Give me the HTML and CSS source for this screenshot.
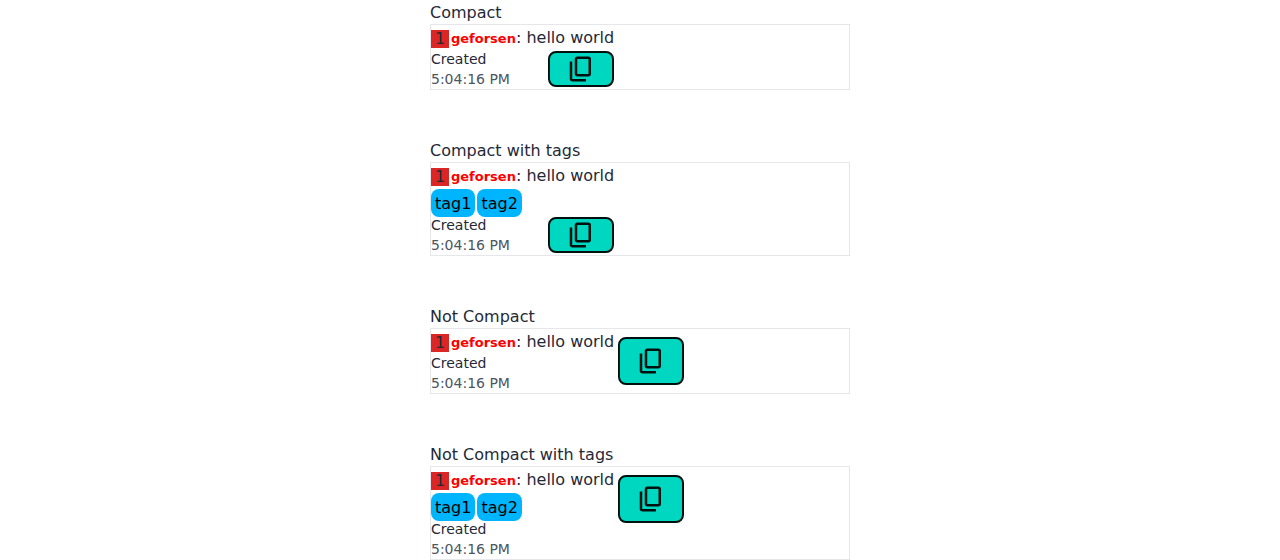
FILE: index.html
```html
<!DOCTYPE html>
<html lang="en">
<head>
<meta charset="utf-8">
<meta name="viewport" content="width=device-width, initial-scale=1">
<title>Messages</title>
<link rel="stylesheet" href="styles.css">
</head>
<body>
<svg class="sprite" aria-hidden="true">
  <symbol id="copy" viewBox="0 -960 960 960">
    <path d="M360-240q-33 0-56.500-23.500T280-320v-480q0-33 23.500-56.500T360-880h360q33 0 56.500 23.500T800-800v480q0 33-23.500 56.500T720-240H360Zm0-80h360v-480H360v480ZM200-80q-33 0-56.500-23.500T120-160v-560h80v560h440v80H200Z"/>
  </symbol>
</svg>
<main class="list">
  <section>
    <h2 class="title">Compact</h2>
    <article class="card">
      <div class="body">
        <div class="message"><span class="badge">1</span><span class="user">geforsen</span>: hello world</div>
        <div class="footer">
          <div class="created"><div>Created</div><time class="time">5:04:16 PM</time></div>
          <button class="copy copy-small" type="button" aria-label="Copy"><svg class="icon"><use href="#copy"/></svg></button>
        </div>
      </div>
    </article>
  </section>
  <section>
    <h2 class="title">Compact with tags</h2>
    <article class="card">
      <div class="body">
        <div class="message"><span class="badge">1</span><span class="user">geforsen</span>: hello world</div>
        <div class="tags"><span class="tag">tag1</span><span class="tag">tag2</span></div>
        <div class="footer">
          <div class="created"><div>Created</div><time class="time">5:04:16 PM</time></div>
          <button class="copy copy-small" type="button" aria-label="Copy"><svg class="icon"><use href="#copy"/></svg></button>
        </div>
      </div>
    </article>
  </section>
  <section>
    <h2 class="title">Not Compact</h2>
    <article class="card">
      <div class="body">
        <div class="message"><span class="badge">1</span><span class="user">geforsen</span>: hello world</div>
        <div class="created"><div>Created</div><time class="time">5:04:16 PM</time></div>
      </div>
      <button class="copy copy-large" type="button" aria-label="Copy"><svg class="icon"><use href="#copy"/></svg></button>
    </article>
  </section>
  <section>
    <h2 class="title">Not Compact with tags</h2>
    <article class="card">
      <div class="body">
        <div class="message"><span class="badge">1</span><span class="user">geforsen</span>: hello world</div>
        <div class="tags"><span class="tag">tag1</span><span class="tag">tag2</span></div>
        <div class="created"><div>Created</div><time class="time">5:04:16 PM</time></div>
      </div>
      <button class="copy copy-large" type="button" aria-label="Copy"><svg class="icon"><use href="#copy"/></svg></button>
    </article>
  </section>
</main>
</body>
</html>
```
FILE: styles.css
```css
* {
  box-sizing: border-box;
}

body {
  margin: 0;
  background: #fff;
  color: #1f2937;
  font: 16px/24px "DejaVu Sans", sans-serif;
}

.sprite {
  display: none;
}

.list {
  display: flex;
  flex-direction: column;
  gap: 48px;
  max-width: 420px;
  margin: 0 auto;
}

.title {
  margin: 0;
  padding-top: 2px;
  font-size: 16px;
  font-weight: 400;
  line-height: 22px;
}

.card {
  display: flex;
  align-items: flex-start;
  gap: 4px;
  border: 1px solid #e5e7eb;
}

.message {
  height: 24px;
  padding-top: 2px;
  line-height: 22px;
  white-space: nowrap;
}

.badge {
  display: inline-block;
  width: 18px;
  height: 18px;
  margin-right: 2px;
  background: #dc2626;
  line-height: 18px;
  text-align: center;
  vertical-align: -1px;
}

.user {
  color: #f00;
  font-size: 13px;
  font-weight: 700;
}

.tags {
  display: flex;
  gap: 2px;
  margin-bottom: -2px;
  padding-top: 2px;
}

.tag {
  padding: 3px 4px 1px;
  border-radius: 8px;
  background: #00b5ff;
  color: #000;
}

.footer {
  display: flex;
  align-items: center;
  justify-content: space-between;
}

.created {
  font-size: 14px;
  line-height: 20px;
}

.time {
  display: block;
  color: #4b5563;
}

.copy {
  display: flex;
  align-items: center;
  justify-content: center;
  width: 66px;
  padding: 0;
  border: 2px solid #00110e;
  border-radius: 8px;
  background: #00d7c0;
  color: #00110e;
  cursor: pointer;
}

.copy-small {
  height: 36px;
}

.copy-large {
  height: 48px;
  margin-top: 8px;
}

.icon {
  width: 30px;
  height: 30px;
  fill: currentColor;
}
```
